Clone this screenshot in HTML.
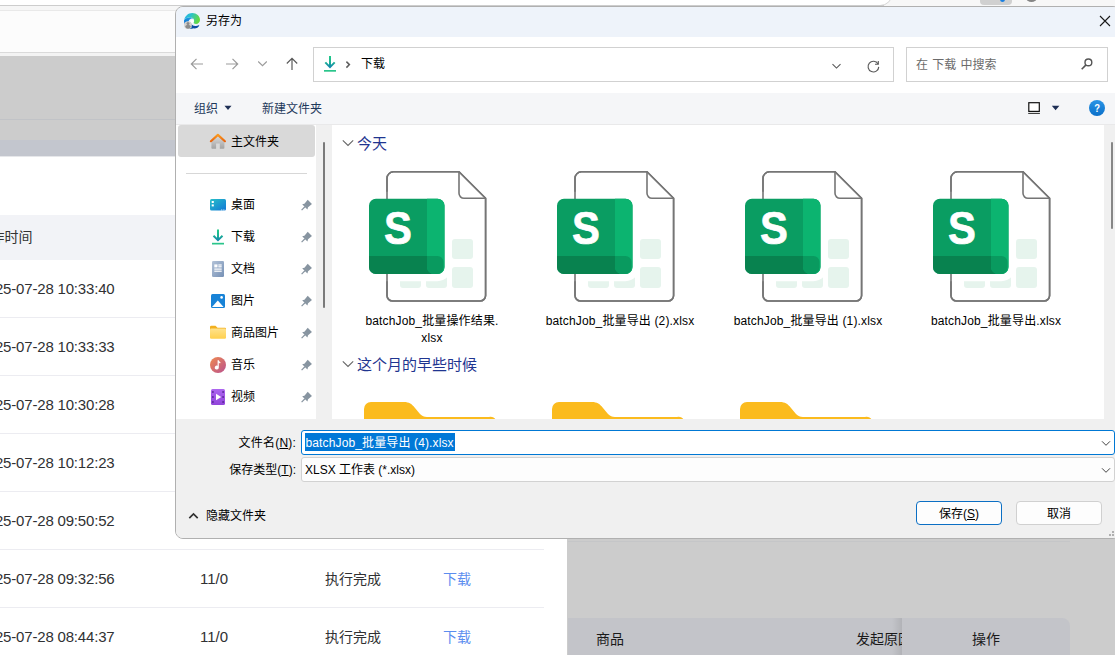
<!DOCTYPE html>
<html lang="zh-CN">
<head>
<meta charset="utf-8">
<title>另存为</title>
<style>
*{box-sizing:border-box;margin:0;padding:0}
html,body{width:1115px;height:655px;overflow:hidden;background:#fff}
body{font-family:"Liberation Sans","Noto Sans CJK SC",sans-serif;font-size:12px;color:#000;position:relative}
.a{position:absolute}
.t{position:absolute;white-space:nowrap;line-height:16px;height:16px;margin-top:1px}
/* ---------- background web page ---------- */
#bg{position:absolute;left:0;top:0;width:1115px;height:655px;overflow:hidden}
.cell{position:absolute;white-space:nowrap;font-size:14px;line-height:20px;height:20px;color:#303133;margin-top:1px}
.sep{position:absolute;left:0;width:544px;height:1px;background:#ececf1}
.lnk{color:#5b8def}
.dt{left:-100px;width:214.500px;text-align:right;font-size:15px;letter-spacing:-.18px}
.num{font-size:15px;letter-spacing:0}
/* ---------- dialog ---------- */
#dlg{position:absolute;left:175px;top:6px;width:946px;height:533px;border:1px solid #b0b0b0;border-radius:8px;background:#f0f0f0;overflow:hidden}
#dlg .in{position:absolute;left:-176px;top:-7px;width:1115px;height:655px}
.side{font-size:12px}
.pin{position:absolute;left:301px;width:11px;height:11px;overflow:visible}
.grp{position:absolute;white-space:nowrap;font-size:15px;line-height:20px;color:#1f3590;margin-top:1px}
.flabel{position:absolute;width:170px;text-align:center;font-size:12px;line-height:17px;color:#000;letter-spacing:.15px}
</style>
</head>
<body>
<div id="bg">
  <!-- browser chrome strip -->
  <div class="a" style="left:0;top:0;width:1115px;height:6px;background:#f7f7f7"></div>
  <div class="a" style="left:-20px;top:-20px;width:913px;height:26px;background:#fff;border:1px solid #d6d6d6;border-radius:0 0 13px 0"></div>
  <div class="a" style="left:980px;top:-10px;width:32px;height:15px;background:#d0d0d0;border-radius:4px"></div>
  <div class="a" style="left:1000px;top:-4px;width:5px;height:5.500px;background:#1a7fe0;border-radius:50%"></div>
  <div class="a" style="left:1026px;top:-7px;width:11px;height:8.500px;background:#858585;border-radius:50%"></div>
  <div class="a" style="left:0;top:5px;width:884px;height:1px;background:#cdcdcd"></div>
  <div class="a" style="left:0;top:6px;width:1115px;height:4px;background:#f6f6f6"></div>
  <div class="a" style="left:0;top:10px;width:1115px;height:1px;background:#e9e9e9"></div>
  <div class="a" style="left:0;top:11px;width:1115px;height:41px;background:#fcfcfc"></div>
  <div class="a" style="left:0;top:52px;width:1115px;height:1px;background:#dadada"></div>
  <div class="a" style="left:0;top:53px;width:1115px;height:3px;background:#f3f3f3"></div>
  <!-- dimmed page -->
  <div class="a" style="left:0;top:56px;width:1115px;height:599px;background:#cccccc"></div>
  <div class="a" style="left:0;top:119px;width:1115px;height:1px;background:#c1c3c7"></div>
  <div class="a" style="left:0;top:140px;width:568px;height:16px;background:#c3c6ce"></div>
  <!-- white drawer -->
  <div class="a" style="left:0;top:156px;width:567px;height:499px;background:#fff"></div>
    <div class="a" style="left:0;top:156px;width:567px;height:1px;background:#e6e7ea"></div>
  <div class="a" style="left:0;top:215px;width:567px;height:45px;background:#f2f3f7"></div>
  <div class="cell" style="left:-23.500px;top:226px;color:#333">操作时间</div>

  <div class="cell dt" style="top:278px">2025-07-28 10:33:40</div>
  <div class="sep" style="top:317px"></div>
  <div class="cell dt" style="top:336px">2025-07-28 10:33:33</div>
  <div class="sep" style="top:375px"></div>
  <div class="cell dt" style="top:394px">2025-07-28 10:30:28</div>
  <div class="sep" style="top:433px"></div>
  <div class="cell dt" style="top:452px">2025-07-28 10:12:23</div>
  <div class="sep" style="top:491px"></div>
  <div class="cell dt" style="top:510px">2025-07-28 09:50:52</div>
  <div class="sep" style="top:549px"></div>
  <div class="cell dt" style="top:568px">2025-07-28 09:32:56</div>
  <div class="cell num" style="left:200px;top:568px">11/0</div>
  <div class="cell" style="left:325px;top:568px">执行完成</div>
  <div class="cell lnk" style="left:443px;top:568px">下载</div>
  <div class="sep" style="top:607px"></div>
  <div class="cell dt" style="top:626px">2025-07-28 08:44:37</div>
  <div class="cell num" style="left:200px;top:626px">11/0</div>
  <div class="cell" style="left:325px;top:626px">执行完成</div>
  <div class="cell lnk" style="left:443px;top:626px">下载</div>

  <!-- right dimmed table -->
  <div class="a" style="left:568px;top:541px;width:502px;height:1px;background:#c5c6c8"></div>
  <div class="a" style="left:568px;top:618px;width:502px;height:60px;background:#c3c4c9;border-radius:0 8px 0 0"></div>
  <div class="a" style="left:892px;top:618px;width:10px;height:40px;background:linear-gradient(90deg,rgba(0,0,0,0),rgba(0,0,0,.09))"></div>
  <div class="cell" style="left:596px;top:628px;color:#1a1a1a">商品</div>
  <div class="a" style="left:856px;top:628px;width:46px;height:20px;overflow:hidden"><div class="cell" style="left:0;top:0;color:#1a1a1a">发起原因</div></div>
  <div class="cell" style="left:972px;top:628px;color:#1a1a1a">操作</div>
</div>

<!-- ================= Save As dialog ================= -->
<div id="dlg"><div class="in">
  <!-- title bar -->
  <div class="a" style="left:176px;top:6px;width:960px;height:31px;background:#eef3fa"></div>
  <svg class="a" style="left:184px;top:13px" width="16" height="16" viewBox="0 0 16 16">
    <defs>
      <linearGradient id="eg1" x1="0" y1="0" x2="0" y2="1"><stop offset="0" stop-color="#1b9de2"/><stop offset=".5" stop-color="#1170d2"/><stop offset="1" stop-color="#0c59a4"/></linearGradient>
      <linearGradient id="eg2" x1="0" y1="0" x2="1" y2=".35"><stop offset="0" stop-color="#22aef0"/><stop offset=".45" stop-color="#2cc3c8"/><stop offset="1" stop-color="#63d944"/></linearGradient>
    </defs>
    <path d="M.3 6.800C1.400 5.600 3.600 4.300 6.200 4.300c1.400 0 2.500.6 3.100 1.400-.7-.3-1.400-.3-2-.1C5.300 6.200 4.200 8 4.400 10.200c.3 2.800 2.400 4.800 5.200 5.100-.6.300-1.200.5-1.600.5-4.400 0-8-3.400-8-7.800 0-.4.100-.8.300-1.200z" fill="url(#eg1)"/>
    <path d="M.3 6.800C1 2.800 4.300 0 8.200 0 12.600 0 16 3.200 16 7c0 2.400-1.800 3.900-4 3.900-1.400 0-2.600-.5-2.600-1.300 0-.5.700-.8.700-2C10.100 5.900 8.600 4.300 6.200 4.300 3.600 4.300 1.400 5.600.3 6.800z" fill="url(#eg2)"/>
    <path d="M5.600 10.200c-.2 2.800 1.800 5.200 4.800 5.200 2.200 0 4-1.200 4.900-3-.2-.3-.4-.3-.7-.1-.9.600-2 .9-3.200.8-2.600-.2-4.800-2-5.200-4.400-.3.400-.5 1-.6 1.500z" fill="#0b4ea2"/>
    <circle cx="8.200" cy="8.400" r="1.800" fill="#fff" opacity=".95"/>
    <circle cx="4" cy="12.100" r="3.900" fill="#d5d1cd"/>
    <circle cx="4" cy="10.500" r="1.500" fill="#8b8b8b"/>
    <path d="M1.200 13.600c.4-1.200 1.500-1.900 2.800-1.900s2.400.7 2.800 1.900c-.6 1.400-1.600 2.200-2.800 2.200s-2.200-.8-2.800-2.200z" fill="#8b8b8b"/>
  </svg>
  <div class="t" style="left:206px;top:12px">另存为</div>
  <svg class="a" style="left:1099px;top:15px" width="12" height="12" viewBox="0 0 12 12"><path d="M1 1l10 10M11 1L1 11" stroke="#1a1a1a" stroke-width="1.100" fill="none"/></svg>

  <!-- nav bar -->
  <div class="a" style="left:176px;top:37px;width:960px;height:56px;background:#fff"></div>
  <svg class="a" style="left:189px;top:56px" width="16" height="16" viewBox="0 0 16 16"><path d="M14 8H2.500M7.500 2.800L2.300 8l5.200 5.200" stroke="#9b9b9b" stroke-width="1.200" fill="none"/></svg>
  <svg class="a" style="left:224px;top:56px" width="16" height="16" viewBox="0 0 16 16"><path d="M2 8h11.500M8.500 2.800L13.700 8l-5.200 5.200" stroke="#9b9b9b" stroke-width="1.200" fill="none"/></svg>
  <svg class="a" style="left:257px;top:59px" width="11" height="9" viewBox="0 0 11 9"><path d="M1.200 2.500l4.300 4.200 4.300-4.200" stroke="#9b9b9b" stroke-width="1.100" fill="none"/></svg>
  <svg class="a" style="left:284px;top:56px" width="16" height="16" viewBox="0 0 16 16"><path d="M8 14V2.500M2.800 7.500L8 2.300l5.200 5.200" stroke="#5a5a5a" stroke-width="1.200" fill="none"/></svg>

  <div class="a" style="left:313px;top:47px;width:581px;height:35px;border:1px solid #d1d1d1;background:#fff"></div>
  <svg class="a" style="left:323px;top:55px" width="14" height="18" viewBox="0 0 14 18">
    <defs><linearGradient id="dg" x1="0" y1="0" x2="0" y2="1"><stop offset="0" stop-color="#20ca88"/><stop offset=".55" stop-color="#1cb394"/><stop offset="1" stop-color="#1486ae"/></linearGradient></defs>
    <path d="M7 1v11M2.300 7.400L7 12.100l4.700-4.700" stroke="url(#dg)" stroke-width="2" fill="none"/>
    <rect x="1" y="15" width="12" height="1.700" fill="#2ac58b"/>
  </svg>
  <svg class="a" style="left:345px;top:60px" width="6" height="9" viewBox="0 0 6 9"><path d="M1.400 1.600l3 3-3 3" stroke="#5e5e5e" stroke-width="1.500" fill="none"/></svg>
  <div class="t" style="left:361px;top:55px">下载</div>
  <svg class="a" style="left:830.500px;top:62px" width="11" height="8" viewBox="0 0 11 8"><path d="M1.500 2.200l4 3.900 4-3.900" stroke="#585858" stroke-width="1.100" fill="none"/></svg>
  <svg class="a" style="left:866px;top:58.500px" width="15" height="15" viewBox="0 0 15 15"><path d="M12.750 7.900a5.350 5.350 0 1 1-.72-2.970" stroke="#5a5a5a" stroke-width="1.150" fill="none"/><path d="M12.300 1.900v3.300H9" stroke="#5a5a5a" stroke-width="1.150" fill="none"/></svg>

  <div class="a" style="left:906px;top:47px;width:202px;height:35px;border:1px solid #d1d1d1;background:#fff"></div>
  <div class="t" style="left:916px;top:56px;color:#6b6b6b;word-spacing:.8px;letter-spacing:.05px">在 下载 中搜索</div>
  <svg class="a" style="left:1080px;top:57px" width="14" height="14" viewBox="0 0 14 14"><circle cx="8.400" cy="5.400" r="3.400" stroke="#555" stroke-width="1.400" fill="none"/><path d="M6 7.900L1.700 12.200" stroke="#555" stroke-width="1.600" fill="none"/></svg>

  <!-- command bar -->
  <div class="a" style="left:176px;top:93px;width:960px;height:31px;background:#f5f6f8"></div>
  <div class="a" style="left:176px;top:124px;width:960px;height:1px;background:#e9e9ea"></div>
  <div class="t" style="left:194px;top:100px;color:#1e395b">组织</div>
  <svg class="a" style="left:224px;top:105px" width="8" height="6" viewBox="0 0 8 6"><path d="M.5.800h7L4 5.100z" fill="#1e2f55"/></svg>
  <div class="t" style="left:262px;top:100px;color:#1e395b">新建文件夹</div>
  <svg class="a" style="left:1027px;top:101px" width="14" height="14" viewBox="0 0 14 14"><rect x="1.800" y="1.700" width="10.500" height="8.700" fill="#fff" stroke="#111" stroke-width="1.200"/><rect x="1.200" y="11.900" width="11.700" height=".9" fill="#111"/></svg>
  <svg class="a" style="left:1051px;top:105px" width="9" height="6" viewBox="0 0 9 6"><path d="M.8.700h7.600L4.600 5.200z" fill="#1e2f55"/></svg>
  <svg class="a" style="left:1089px;top:100px" width="16" height="16" viewBox="0 0 16 16">
    <defs><linearGradient id="hg" x1="0" y1="0" x2="0" y2="1"><stop offset="0" stop-color="#2b95e6"/><stop offset="1" stop-color="#0a6fc9"/></linearGradient></defs>
    <circle cx="8" cy="8" r="8" fill="url(#hg)"/>
    <text transform="translate(8.100 12.300) scale(.82 1)" font-family="Liberation Sans, sans-serif" font-size="11.500" font-weight="bold" fill="#fff" text-anchor="middle">?</text>
  </svg>

  <!-- main area -->
  <div class="a" style="left:176px;top:125px;width:960px;height:294px;background:#fff"></div>
  <!-- sidebar -->
  <div class="a" style="left:178px;top:125px;width:137px;height:32px;background:#d9d9d9;border-radius:3px"></div>
  <svg class="a" style="left:209px;top:133px" width="18" height="17" viewBox="0 0 18 17">
    <defs><linearGradient id="hm" x1="0" y1="0" x2="0" y2="1"><stop offset="0" stop-color="#dcdcdc"/><stop offset="1" stop-color="#a2a2a2"/></linearGradient>
    <linearGradient id="hr" x1="0" y1="0" x2="0" y2="1"><stop offset="0" stop-color="#fb9a1e"/><stop offset="1" stop-color="#e8650f"/></linearGradient></defs>
    <path d="M2.400 7.800L8.900 2.500l6.500 5.300v7.200a.8.800 0 0 1-.8.800h-3.800v-5.400H7.100v5.400H3.200a.8.800 0 0 1-.8-.8z" fill="url(#hm)"/>
    <path d="M1.900 8.200L8.900 1.900l7 6.300" stroke="url(#hr)" stroke-width="2.200" fill="none" stroke-linecap="round" stroke-linejoin="round"/>
  </svg>
  <div class="t" style="left:231px;top:133px">主文件夹</div>
  <div class="a" style="left:186px;top:173px;width:121px;height:1px;background:#d7d7d7"></div>

  <div id="sideitems">
  <!-- 桌面 -->
  <svg class="a" style="left:210px;top:198px" width="16" height="13" viewBox="0 0 16 13">
    <defs><linearGradient id="dk" x1="0" y1="0" x2="1" y2="1"><stop offset="0" stop-color="#27c0c8"/><stop offset="1" stop-color="#1277d6"/></linearGradient></defs>
    <rect x="0" y="1" width="16" height="11.500" rx="1.500" fill="url(#dk)"/>
    <rect x="1.700" y="3" width="2.100" height="2" fill="#fff"/><rect x="1.700" y="6.400" width="2.100" height="2" fill="#fff"/>
    <rect x="11" y="11.500" width="1.300" height="1" fill="#cfeaf8"/><rect x="13.200" y="11.500" width="1.300" height="1" fill="#cfeaf8"/>
  </svg>
  <div class="t" style="left:231px;top:196px">桌面</div>
  <svg class="pin" style="top:199px" width="11" height="11" viewBox="0 0 11 11"><g transform="translate(.6 11.100) rotate(-135)" fill="#8794a0"><rect x="-.6" y="0" width="1.200" height="4.800"/><path d="M-3.700 4.500h7.400L2.500 6.600h-5z"/><path d="M-2.500 6.300h5l.5 5.300h-6z"/></g></svg>
  <!-- 下载 -->
  <svg class="a" style="left:211px;top:228px" width="14" height="18" viewBox="0 0 14 18">
    <path d="M7 1.500v10.500M2.500 7.700L7 12.200l4.500-4.500" stroke="url(#dg)" stroke-width="2" fill="none"/>
    <rect x="1" y="14.800" width="12" height="1.700" fill="#2ac58b"/>
  </svg>
  <div class="t" style="left:231px;top:228px">下载</div>
  <svg class="pin" style="top:231px" width="11" height="11" viewBox="0 0 11 11"><g transform="translate(.6 11.100) rotate(-135)" fill="#8794a0"><rect x="-.6" y="0" width="1.200" height="4.800"/><path d="M-3.700 4.500h7.400L2.500 6.600h-5z"/><path d="M-2.500 6.300h5l.5 5.300h-6z"/></g></svg>
  <!-- 文档 -->
  <svg class="a" style="left:212px;top:261px" width="12" height="16" viewBox="0 0 12 16">
    <defs><linearGradient id="dc" x1="0" y1="0" x2="1" y2="1"><stop offset="0" stop-color="#b4c3d8"/><stop offset="1" stop-color="#7590b5"/></linearGradient></defs>
    <rect x="0" y="0" width="12" height="16" rx="1.300" fill="url(#dc)"/>
    <rect x="2.300" y="3.400" width="3.200" height="3" fill="#fff"/><rect x="6.300" y="3.400" width="3.400" height="1.200" fill="#fff"/><rect x="6.300" y="5.200" width="3.400" height="1.200" fill="#fff"/>
    <rect x="2.300" y="7.500" width="7.400" height="1.200" fill="#fff"/><rect x="2.300" y="9.600" width="7.400" height="1.200" fill="#fff"/>
  </svg>
  <div class="t" style="left:231px;top:260px">文档</div>
  <svg class="pin" style="top:263px" width="11" height="11" viewBox="0 0 11 11"><g transform="translate(.6 11.100) rotate(-135)" fill="#8794a0"><rect x="-.6" y="0" width="1.200" height="4.800"/><path d="M-3.700 4.500h7.400L2.500 6.600h-5z"/><path d="M-2.500 6.300h5l.5 5.300h-6z"/></g></svg>
  <!-- 图片 -->
  <svg class="a" style="left:211px;top:294px" width="14" height="14" viewBox="0 0 14 14">
    <rect x="0" y="0" width="14" height="14" rx="1.500" fill="#1883d7"/>
    <path d="M1 13l5.800-6.400L12.600 13z" fill="#fff"/>
    <circle cx="10.600" cy="3.400" r="1.300" fill="#fff"/>
  </svg>
  <div class="t" style="left:231px;top:292px">图片</div>
  <svg class="pin" style="top:295px" width="11" height="11" viewBox="0 0 11 11"><g transform="translate(.6 11.100) rotate(-135)" fill="#8794a0"><rect x="-.6" y="0" width="1.200" height="4.800"/><path d="M-3.700 4.500h7.400L2.500 6.600h-5z"/><path d="M-2.500 6.300h5l.5 5.300h-6z"/></g></svg>
  <!-- 商品图片 -->
  <svg class="a" style="left:210px;top:325px" width="16" height="14" viewBox="0 0 16 14">
    <defs><linearGradient id="fd" x1="0" y1="0" x2="0" y2="1"><stop offset="0" stop-color="#ffe28c"/><stop offset="1" stop-color="#ffd04e"/></linearGradient></defs>
    <path d="M0 2a1.200 1.200 0 0 1 1.200-1.200h4.300l2 1.900H15A1 1 0 0 1 16 3.700V6H0z" fill="#f2b01e"/>
    <rect x="0" y="3.600" width="16" height="10.200" rx="1.200" fill="url(#fd)"/>
  </svg>
  <div class="t" style="left:231px;top:324px">商品图片</div>
  <svg class="pin" style="top:327px" width="11" height="11" viewBox="0 0 11 11"><g transform="translate(.6 11.100) rotate(-135)" fill="#8794a0"><rect x="-.6" y="0" width="1.200" height="4.800"/><path d="M-3.700 4.500h7.400L2.500 6.600h-5z"/><path d="M-2.500 6.300h5l.5 5.300h-6z"/></g></svg>
  <!-- 音乐 -->
  <svg class="a" style="left:210px;top:357px" width="16" height="16" viewBox="0 0 16 16">
    <defs><linearGradient id="mu" x1="0" y1="0" x2="1" y2="1"><stop offset="0" stop-color="#f08a4f"/><stop offset="1" stop-color="#b9528f"/></linearGradient></defs>
    <circle cx="8" cy="8" r="8" fill="url(#mu)"/>
    <path d="M7.600 3.300h1.200c.2 1.200 1.100 1.600 1.800 2.200l-.6 1c-.5-.4-.9-.6-1.200-1v5a2 2 0 1 1-1.200-1.800z" fill="#fff"/>
  </svg>
  <div class="t" style="left:231px;top:356px">音乐</div>
  <svg class="pin" style="top:359px" width="11" height="11" viewBox="0 0 11 11"><g transform="translate(.6 11.100) rotate(-135)" fill="#8794a0"><rect x="-.6" y="0" width="1.200" height="4.800"/><path d="M-3.700 4.500h7.400L2.500 6.600h-5z"/><path d="M-2.500 6.300h5l.5 5.300h-6z"/></g></svg>
  <!-- 视频 -->
  <svg class="a" style="left:211px;top:389px" width="14" height="16" viewBox="0 0 14 16">
    <defs><linearGradient id="vd" x1="0" y1="0" x2="0" y2="1"><stop offset="0" stop-color="#ad66f0"/><stop offset="1" stop-color="#9145da"/></linearGradient></defs>
    <rect x="0" y="0" width="14" height="16" rx="1.500" fill="url(#vd)"/>
    <path d="M5 4.800L10.200 8 5 11.200z" fill="#fff"/>
    <g fill="#4a1d86"><rect x="1.200" y="2.200" width="1.400" height="1.600"/><rect x="1.200" y="7.200" width="1.400" height="1.600"/><rect x="1.200" y="12.200" width="1.400" height="1.600"/><rect x="11.400" y="2.200" width="1.400" height="1.600"/><rect x="11.400" y="7.200" width="1.400" height="1.600"/><rect x="11.400" y="12.200" width="1.400" height="1.600"/></g>
  </svg>
  <div class="t" style="left:231px;top:388px">视频</div>
  <svg class="pin" style="top:391px" width="11" height="11" viewBox="0 0 11 11"><g transform="translate(.6 11.100) rotate(-135)" fill="#8794a0"><rect x="-.6" y="0" width="1.200" height="4.800"/><path d="M-3.700 4.500h7.400L2.500 6.600h-5z"/><path d="M-2.500 6.300h5l.5 5.300h-6z"/></g></svg>
</div>

  <!-- sidebar scrollbar -->
  <div class="a" style="left:316px;top:125px;width:16px;height:294px;background:#f0f0f0"></div>
  <div class="a" style="left:323px;top:142px;width:2px;height:166px;background:#7a7a7a;border-radius:1px"></div>

  <!-- content scrollbar -->
  <div class="a" style="left:1104px;top:125px;width:20px;height:294px;background:#f0f0f0"></div>
  <div class="a" style="left:1111px;top:142px;width:2px;height:87px;background:#868686;border-radius:1px"></div>

  <div id="content">
  <svg class="a" style="left:342px;top:138px" width="12" height="10" viewBox="0 0 12 10"><path d="M.8 2.300l5.200 5.200 5.200-5.200" stroke="#666" stroke-width="1.080" fill="none"/></svg>
  <div class="grp" style="left:357px;top:133px">今天</div>

  <svg class="a" style="left:368px;top:170px" width="120" height="133" viewBox="0 0 120 133">
    <path d="M25.500 1.800h65.500L117.600 28.300V125.500a5.500 5.500 0 0 1-5.500 5.500H24.500a5.500 5.500 0 0 1-5.500-5.500V8.300a6.500 6.500 0 0 1 6.500-6.500z" fill="#fff" stroke="#757575" stroke-width="1.600"/>
    <path d="M91 1.800v21.500a5 5 0 0 0 5 5h21.600" fill="none" stroke="#757575" stroke-width="1.600"/>
    <rect x="84" y="69" width="21" height="20" rx="3" fill="#e6f4ed"/>
    <rect x="84" y="97" width="21" height="21" rx="3" fill="#e6f4ed"/>
    <path d="M32 104h21v11a3 3 0 0 1-3 3H35a3 3 0 0 1-3-3z" fill="#e6f4ed"/>
    <path d="M58 100h21v15a3 3 0 0 1-3 3H61a3 3 0 0 1-3-3z" fill="#e6f4ed"/>
    <rect x="-6" y="21.700" width="89.500" height="89.500" rx="14" fill="#fff"/>
    <path d="M25.500 1.800h65.500L117.600 28.300V125.500a5.500 5.500 0 0 1-5.500 5.500H24.500a5.500 5.500 0 0 1-5.500-5.500V8.300a6.500 6.500 0 0 1 6.500-6.500z" fill="none" stroke="#757575" stroke-width="1.600"/>
    <rect x="1" y="28.700" width="75.500" height="75.300" rx="7" fill="#0a9d62"/>
    <path d="M59 28.700h10.500a7 7 0 0 1 7 7V97a7 7 0 0 1-7 7H66a7 7 0 0 1-7-7z" fill="#0cb470"/>
    <path d="M1 86h58v11a7 7 0 0 0 7 7H8a7 7 0 0 1-7-7z" fill="#08824f"/>
    <path d="M59 86h10.500a6 6 0 0 1 6 6V97.500a6.500 6.500 0 0 1-6.500 6.500H66a7 7 0 0 1-7-7z" fill="#099a5f"/>
    <text transform="translate(29.900 73.800) scale(.89 1)" font-family="Liberation Sans, sans-serif" font-weight="bold" font-size="47" fill="#fff" stroke="#fff" stroke-width=".7" text-anchor="middle">S</text>
  </svg>
  <svg class="a" style="left:556px;top:170px" width="120" height="133" viewBox="0 0 120 133">
    <path d="M25.500 1.800h65.500L117.600 28.300V125.500a5.500 5.500 0 0 1-5.500 5.500H24.500a5.500 5.500 0 0 1-5.500-5.500V8.300a6.500 6.500 0 0 1 6.500-6.500z" fill="#fff" stroke="#757575" stroke-width="1.600"/>
    <path d="M91 1.800v21.500a5 5 0 0 0 5 5h21.600" fill="none" stroke="#757575" stroke-width="1.600"/>
    <rect x="84" y="69" width="21" height="20" rx="3" fill="#e6f4ed"/>
    <rect x="84" y="97" width="21" height="21" rx="3" fill="#e6f4ed"/>
    <path d="M32 104h21v11a3 3 0 0 1-3 3H35a3 3 0 0 1-3-3z" fill="#e6f4ed"/>
    <path d="M58 100h21v15a3 3 0 0 1-3 3H61a3 3 0 0 1-3-3z" fill="#e6f4ed"/>
    <rect x="-6" y="21.700" width="89.500" height="89.500" rx="14" fill="#fff"/>
    <path d="M25.500 1.800h65.500L117.600 28.300V125.500a5.500 5.500 0 0 1-5.500 5.500H24.500a5.500 5.500 0 0 1-5.500-5.500V8.300a6.500 6.500 0 0 1 6.500-6.500z" fill="none" stroke="#757575" stroke-width="1.600"/>
    <rect x="1" y="28.700" width="75.500" height="75.300" rx="7" fill="#0a9d62"/>
    <path d="M59 28.700h10.500a7 7 0 0 1 7 7V97a7 7 0 0 1-7 7H66a7 7 0 0 1-7-7z" fill="#0cb470"/>
    <path d="M1 86h58v11a7 7 0 0 0 7 7H8a7 7 0 0 1-7-7z" fill="#08824f"/>
    <path d="M59 86h10.500a6 6 0 0 1 6 6V97.500a6.500 6.500 0 0 1-6.500 6.500H66a7 7 0 0 1-7-7z" fill="#099a5f"/>
    <text transform="translate(29.900 73.800) scale(.89 1)" font-family="Liberation Sans, sans-serif" font-weight="bold" font-size="47" fill="#fff" stroke="#fff" stroke-width=".7" text-anchor="middle">S</text>
  </svg>
  <svg class="a" style="left:744px;top:170px" width="120" height="133" viewBox="0 0 120 133">
    <path d="M25.500 1.800h65.500L117.600 28.300V125.500a5.500 5.500 0 0 1-5.500 5.500H24.500a5.500 5.500 0 0 1-5.500-5.500V8.300a6.500 6.500 0 0 1 6.500-6.500z" fill="#fff" stroke="#757575" stroke-width="1.600"/>
    <path d="M91 1.800v21.500a5 5 0 0 0 5 5h21.600" fill="none" stroke="#757575" stroke-width="1.600"/>
    <rect x="84" y="69" width="21" height="20" rx="3" fill="#e6f4ed"/>
    <rect x="84" y="97" width="21" height="21" rx="3" fill="#e6f4ed"/>
    <path d="M32 104h21v11a3 3 0 0 1-3 3H35a3 3 0 0 1-3-3z" fill="#e6f4ed"/>
    <path d="M58 100h21v15a3 3 0 0 1-3 3H61a3 3 0 0 1-3-3z" fill="#e6f4ed"/>
    <rect x="-6" y="21.700" width="89.500" height="89.500" rx="14" fill="#fff"/>
    <path d="M25.500 1.800h65.500L117.600 28.300V125.500a5.500 5.500 0 0 1-5.500 5.500H24.500a5.500 5.500 0 0 1-5.500-5.500V8.300a6.500 6.500 0 0 1 6.500-6.500z" fill="none" stroke="#757575" stroke-width="1.600"/>
    <rect x="1" y="28.700" width="75.500" height="75.300" rx="7" fill="#0a9d62"/>
    <path d="M59 28.700h10.500a7 7 0 0 1 7 7V97a7 7 0 0 1-7 7H66a7 7 0 0 1-7-7z" fill="#0cb470"/>
    <path d="M1 86h58v11a7 7 0 0 0 7 7H8a7 7 0 0 1-7-7z" fill="#08824f"/>
    <path d="M59 86h10.500a6 6 0 0 1 6 6V97.500a6.500 6.500 0 0 1-6.500 6.500H66a7 7 0 0 1-7-7z" fill="#099a5f"/>
    <text transform="translate(29.900 73.800) scale(.89 1)" font-family="Liberation Sans, sans-serif" font-weight="bold" font-size="47" fill="#fff" stroke="#fff" stroke-width=".7" text-anchor="middle">S</text>
  </svg>
  <svg class="a" style="left:932px;top:170px" width="120" height="133" viewBox="0 0 120 133">
    <path d="M25.500 1.800h65.500L117.600 28.300V125.500a5.500 5.500 0 0 1-5.500 5.500H24.500a5.500 5.500 0 0 1-5.500-5.500V8.300a6.500 6.500 0 0 1 6.500-6.500z" fill="#fff" stroke="#757575" stroke-width="1.600"/>
    <path d="M91 1.800v21.500a5 5 0 0 0 5 5h21.600" fill="none" stroke="#757575" stroke-width="1.600"/>
    <rect x="84" y="69" width="21" height="20" rx="3" fill="#e6f4ed"/>
    <rect x="84" y="97" width="21" height="21" rx="3" fill="#e6f4ed"/>
    <path d="M32 104h21v11a3 3 0 0 1-3 3H35a3 3 0 0 1-3-3z" fill="#e6f4ed"/>
    <path d="M58 100h21v15a3 3 0 0 1-3 3H61a3 3 0 0 1-3-3z" fill="#e6f4ed"/>
    <rect x="-6" y="21.700" width="89.500" height="89.500" rx="14" fill="#fff"/>
    <path d="M25.500 1.800h65.500L117.600 28.300V125.500a5.500 5.500 0 0 1-5.500 5.500H24.500a5.500 5.500 0 0 1-5.500-5.500V8.300a6.500 6.500 0 0 1 6.500-6.500z" fill="none" stroke="#757575" stroke-width="1.600"/>
    <rect x="1" y="28.700" width="75.500" height="75.300" rx="7" fill="#0a9d62"/>
    <path d="M59 28.700h10.500a7 7 0 0 1 7 7V97a7 7 0 0 1-7 7H66a7 7 0 0 1-7-7z" fill="#0cb470"/>
    <path d="M1 86h58v11a7 7 0 0 0 7 7H8a7 7 0 0 1-7-7z" fill="#08824f"/>
    <path d="M59 86h10.500a6 6 0 0 1 6 6V97.500a6.500 6.500 0 0 1-6.500 6.500H66a7 7 0 0 1-7-7z" fill="#099a5f"/>
    <text transform="translate(29.900 73.800) scale(.89 1)" font-family="Liberation Sans, sans-serif" font-weight="bold" font-size="47" fill="#fff" stroke="#fff" stroke-width=".7" text-anchor="middle">S</text>
  </svg>
  <div class="flabel" style="left:347px;top:313px">batchJob_批量操作结果.<br>xlsx</div>
  <div class="flabel" style="left:535px;top:313px">batchJob_批量导出 (2).xlsx</div>
  <div class="flabel" style="left:723px;top:313px">batchJob_批量导出 (1).xlsx</div>
  <div class="flabel" style="left:911px;top:313px">batchJob_批量导出.xlsx</div>

  <svg class="a" style="left:342px;top:359px" width="12" height="10" viewBox="0 0 12 10"><path d="M.8 2.300l5.200 5.200 5.200-5.200" stroke="#666" stroke-width="1.080" fill="none"/></svg>
  <div class="grp" style="left:357px;top:354px">这个月的早些时候</div>

  <svg class="a" style="left:364px;top:401px" width="132" height="19" viewBox="0 0 132 19"><path d="M0 19V8a7 7 0 0 1 7-7h33c5 0 8 2 11 6l5 6c2 2 4 3 7 3h62a7 7 0 0 1 7 3v0z" fill="#fbbb1e"/></svg>
  <svg class="a" style="left:552px;top:401px" width="132" height="19" viewBox="0 0 132 19"><path d="M0 19V8a7 7 0 0 1 7-7h33c5 0 8 2 11 6l5 6c2 2 4 3 7 3h62a7 7 0 0 1 7 3v0z" fill="#fbbb1e"/></svg>
  <svg class="a" style="left:740px;top:401px" width="132" height="19" viewBox="0 0 132 19"><path d="M0 19V8a7 7 0 0 1 7-7h33c5 0 8 2 11 6l5 6c2 2 4 3 7 3h62a7 7 0 0 1 7 3v0z" fill="#fbbb1e"/></svg></div>

  <!-- bottom panel -->
  <div class="a" style="left:176px;top:419px;width:960px;height:130px;background:#f0f0f0"></div>
  <div id="bottom">
  <div class="t" style="left:196px;top:434px;width:100px;text-align:right;letter-spacing:.2px">文件名(<u>N</u>):</div>
  <div class="a" style="left:301px;top:430px;width:814px;height:25px;border:1px solid #0078d4;border-radius:3px;background:#fff"></div>
  <div class="a" style="left:305px;top:433px;width:150px;height:18px;background:#0078d7"></div>
  <div class="t" style="left:305.500px;top:434px;color:#fff;letter-spacing:.13px">batchJob_批量导出 (4).xlsx</div>
  <svg class="a" style="left:1101px;top:440px" width="10" height="7" viewBox="0 0 10 7"><path d="M1 1.300l4 4 4-4" stroke="#444" stroke-width="1" fill="none"/></svg>

  <div class="t" style="left:196px;top:461px;width:100px;text-align:right">保存类型(<u>T</u>):</div>
  <div class="a" style="left:301px;top:457px;width:814px;height:25px;border:1px solid #d2d2d2;border-radius:3px;background:#fdfdfd"></div>
  <div class="t" style="left:305px;top:461px">XLSX 工作表 (*.xlsx)</div>
  <svg class="a" style="left:1101px;top:467px" width="10" height="7" viewBox="0 0 10 7"><path d="M1 1.300l4 4 4-4" stroke="#444" stroke-width="1" fill="none"/></svg>

  <svg class="a" style="left:188px;top:511px" width="11" height="9" viewBox="0 0 11 9"><path d="M1.300 7.200L5.500 3l4.200 4.200" stroke="#333" stroke-width="1.700" fill="none"/></svg>
  <div class="t" style="left:206px;top:507px">隐藏文件夹</div>

  <div class="a" style="left:916px;top:501px;width:86px;height:24px;border:1.500px solid #0b6fc4;border-radius:4px;background:#fdfdfd"></div>
  <div class="t" style="left:916px;top:505px;width:86px;text-align:center">保存(<u>S</u>)</div>
  <div class="a" style="left:1016px;top:501px;width:86px;height:24px;border:1px solid #d0d0d0;border-radius:4px;background:#fdfdfd"></div>
  <div class="t" style="left:1016px;top:505px;width:86px;text-align:center">取消</div>
  <svg class="a" style="left:1107px;top:530px" width="8" height="8" viewBox="0 0 8 8"><g fill="#b0b0b0"><rect x="5" y="1" width="2" height="2"/><rect x="2" y="4" width="2" height="2"/><rect x="5" y="4" width="2" height="2"/></g></svg>
</div>
</div></div>
</body>
</html>
